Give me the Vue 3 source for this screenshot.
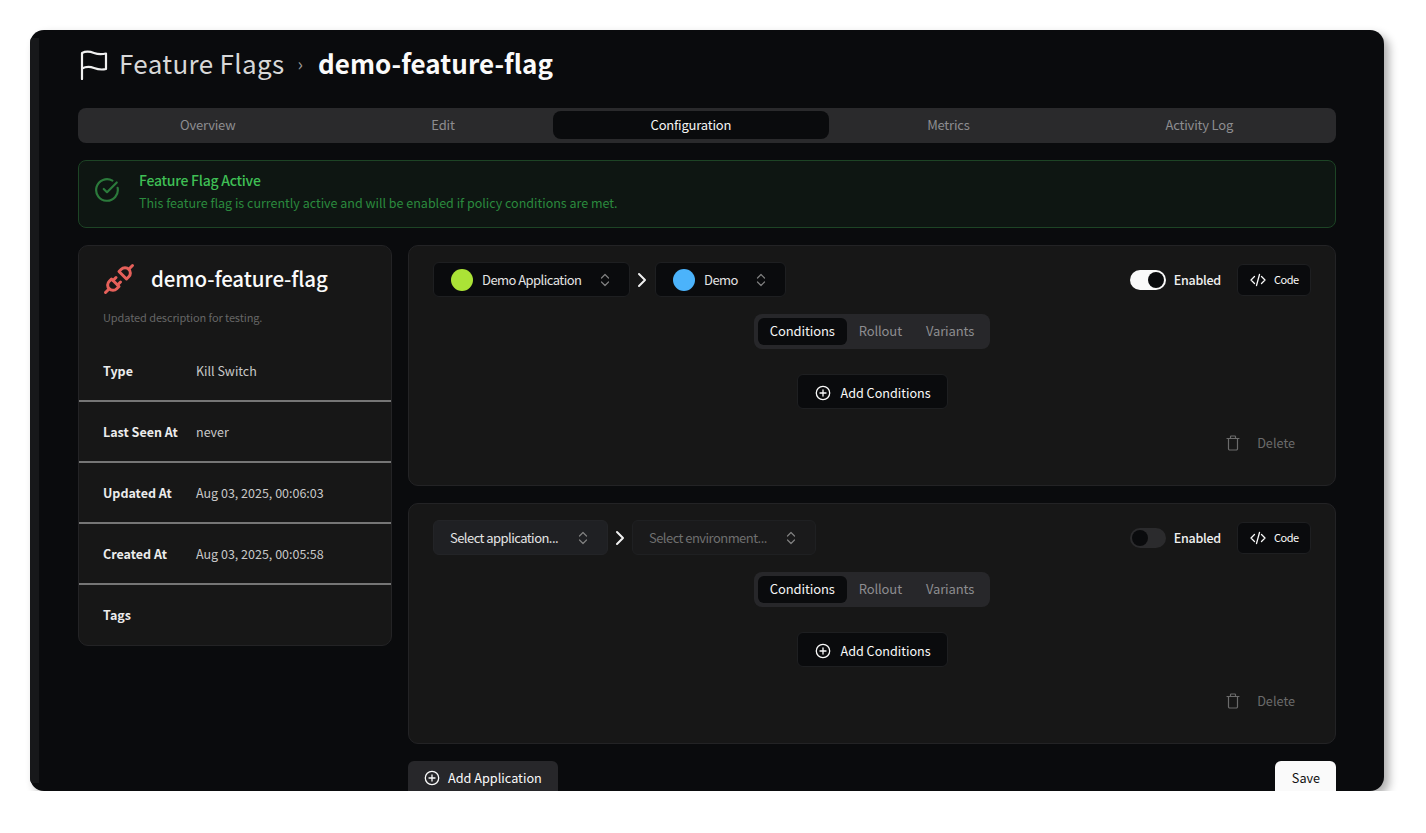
<script setup>
const tabs = ['Overview', 'Edit', 'Configuration', 'Metrics', 'Activity Log']
const details = [
  { label: 'Type', value: 'Kill Switch' },
  { label: 'Last Seen At', value: 'never' },
  { label: 'Updated At', value: 'Aug 03, 2025, 00:06:03' },
  { label: 'Created At', value: 'Aug 03, 2025, 00:05:58' },
  { label: 'Tags', value: '' },
]
const policies = [
  { id: 1, enabled: true, selected: true },
  { id: 2, enabled: false, selected: false },
]
const subTabs = ['Conditions', 'Rollout', 'Variants']
</script>

<template>
  <div class="window">
    <div class="rail"></div>
    <main class="main">
      <h1 class="crumbs">
        <svg class="crumbs__flag" viewBox="0 0 28 30" fill="none" stroke="currentColor" stroke-width="2.200" stroke-linecap="round" stroke-linejoin="round">
          <path d="M2 29V3c4-2 8-1.500 12 0s8 1.500 12 .5v15.500c-4 1-8 .5-12-1s-8-1.500-12 .5" />
        </svg>
        <span class="crumbs__root">Feature Flags</span>
        <span class="crumbs__sep">›</span>
        <span class="crumbs__name">demo-feature-flag</span>
      </h1>

      <nav class="tabs">
        <a v-for="tab in tabs" :key="tab" class="tabs__item" :class="{ 'tabs__item--active': tab === 'Configuration' }">{{ tab }}</a>
      </nav>

      <section class="alert">
        <svg class="alert__icon" viewBox="0 0 24 24" fill="none" stroke="currentColor" stroke-width="2" stroke-linecap="round" stroke-linejoin="round">
          <path d="M21.800 10A10 10 0 1 1 17 3.300" />
          <path d="M9 11l3 3L21 5" />
        </svg>
        <div class="alert__body">
          <div class="alert__title">Feature Flag Active</div>
          <div class="alert__text">This feature flag is currently active and will be enabled if policy conditions are met.</div>
        </div>
      </section>

      <div class="columns">
        <aside class="info">
          <div class="info__head">
            <svg class="info__plug" viewBox="0 0 24 24" fill="none" stroke="currentColor" stroke-width="2" stroke-linecap="round" stroke-linejoin="round">
              <path d="M7 12l5 5l-1.500 1.500a3.536 3.536 0 1 1-5-5l1.500-1.500z" />
              <path d="M17 12l-5-5l1.500-1.500a3.536 3.536 0 1 1 5 5l-1.500 1.500z" />
              <path d="M3 21l2.500-2.500" />
              <path d="M18.500 5.500L21 3" />
              <path d="M10 11l-2 2" />
              <path d="M13 14l-2 2" />
            </svg>
            <span class="info__title">demo-feature-flag</span>
          </div>
          <p class="info__desc">Updated description for testing.</p>
          <div class="info__rows">
            <div v-for="row in details" :key="row.label" class="info__row">
              <span class="info__label">{{ row.label }}</span>
              <span class="info__value">{{ row.value }}</span>
            </div>
          </div>
        </aside>

        <div class="policies">
          <section v-for="policy in policies" :key="policy.id" class="policy">
            <div class="policy__top">
              <div class="policy__selects">
                <template v-if="policy.selected">
                  <button class="select select--app">
                    <span class="dot dot--lime"></span>
                    <span>Demo Application</span>
                    <svg class="updown" viewBox="0 0 12 16" fill="none" stroke="currentColor" stroke-width="1.200" stroke-linecap="round" stroke-linejoin="round"><path d="M2.500 6L6 2.500 9.500 6M2.500 10L6 13.500 9.500 10" /></svg>
                  </button>
                  <svg class="next" viewBox="0 0 10 16" fill="none" stroke="currentColor" stroke-width="2" stroke-linecap="round" stroke-linejoin="round"><path d="M2 2l6 6-6 6" /></svg>
                  <button class="select select--env">
                    <span class="dot dot--blue"></span>
                    <span>Demo</span>
                    <svg class="updown" viewBox="0 0 12 16" fill="none" stroke="currentColor" stroke-width="1.200" stroke-linecap="round" stroke-linejoin="round"><path d="M2.500 6L6 2.500 9.500 6M2.500 10L6 13.500 9.500 10" /></svg>
                  </button>
                </template>
                <template v-else>
                  <button class="select select--pick">
                    <span>Select application...</span>
                    <svg class="updown" viewBox="0 0 12 16" fill="none" stroke="currentColor" stroke-width="1.200" stroke-linecap="round" stroke-linejoin="round"><path d="M2.500 6L6 2.500 9.500 6M2.500 10L6 13.500 9.500 10" /></svg>
                  </button>
                  <svg class="next" viewBox="0 0 10 16" fill="none" stroke="currentColor" stroke-width="2" stroke-linecap="round" stroke-linejoin="round"><path d="M2 2l6 6-6 6" /></svg>
                  <button class="select select--disabled">
                    <span>Select environment...</span>
                    <svg class="updown" viewBox="0 0 12 16" fill="none" stroke="currentColor" stroke-width="1.200" stroke-linecap="round" stroke-linejoin="round"><path d="M2.500 6L6 2.500 9.500 6M2.500 10L6 13.500 9.500 10" /></svg>
                  </button>
                </template>
              </div>
              <div class="policy__right">
                <span class="switch" :class="{ 'switch--on': policy.enabled }"><span class="switch__knob"></span></span>
                <span class="switch-label">Enabled</span>
                <button class="code">
                  <svg viewBox="0 0 16 16" fill="none" stroke="currentColor" stroke-width="1.300" stroke-linecap="round" stroke-linejoin="round"><path d="M4.500 4.500L1 8l3.500 3.500M11.500 4.500L15 8l-3.500 3.500M9.500 2.500l-3 11" /></svg>
                  <span class="code__label">Code</span>
                </button>
              </div>
            </div>

            <div class="subtabs">
              <a v-for="sub in subTabs" :key="sub" class="subtabs__item" :class="{ 'subtabs__item--active': sub === 'Conditions' }">{{ sub }}</a>
            </div>

            <button class="add-cond">
              <svg class="plus" viewBox="0 0 16 16" fill="none" stroke="currentColor" stroke-width="1.300" stroke-linecap="round"><circle cx="8" cy="8" r="6.700" /><path d="M8 5v6M5 8h6" /></svg>
              <span>Add Conditions</span>
            </button>

            <div class="policy__foot">
              <svg class="trash" viewBox="0 0 14 16" fill="none" stroke="currentColor" stroke-width="1.200" stroke-linecap="round" stroke-linejoin="round"><path d="M1 3.500h12M2.500 3.500v10.300a1.200 1.200 0 0 0 1.200 1.200h6.600a1.200 1.200 0 0 0 1.200-1.200V3.500M4.500 3.500V1.800A.8.8 0 0 1 5.300 1h3.400a.8.8 0 0 1 .8.800v1.700" /></svg>
              <span>Delete</span>
            </div>
          </section>

          <div class="actions">
            <button class="add-app">
              <svg class="plus" viewBox="0 0 16 16" fill="none" stroke="currentColor" stroke-width="1.300" stroke-linecap="round"><circle cx="8" cy="8" r="6.700" /><path d="M8 5v6M5 8h6" /></svg>
              <span>Add Application</span>
            </button>
            <button class="save">Save</button>
          </div>
        </div>
      </div>
    </main>
  </div>
</template>

<style>
html,
body {
  margin: 0;
  background: #fff;
}
</style>

<style scoped>
.window {
  box-sizing: border-box;
  position: relative;
  display: flex;
  width: 1354px;
  height: 761px;
  margin: 30px 0 0 30px;
  overflow: hidden;
  border-radius: 14px;
  background: #0a0b0d;
  box-shadow: 5px 5px 10px rgba(0, 0, 0, 0.32);
  font-family: "Noto Sans CJK SC", "Noto Sans", sans-serif;
  color: #fafafa;
  white-space: nowrap;
}

.rail {
  flex: none;
  width: 9px;
  margin: 8px 0;
  background: #17181a;
}

.main {
  flex: none;
  width: 1258px;
  margin-left: 39px;
}

button {
  font-family: inherit;
  color: inherit;
  cursor: pointer;
}

.crumbs {
  display: flex;
  align-items: center;
  height: 66px;
  margin: 0 0 12px;
  font-size: 26px;
  line-height: 1;
  font-weight: 400;
}

.crumbs__flag {
  flex: none;
  width: 28px;
  height: 30px;
  margin: 4px 0 0 2px;
  color: #f0f0f0;
}

.crumbs__root {
  margin-left: 11px;
  letter-spacing: 0.35px;
  color: #d8d8d8;
}

.crumbs__sep {
  margin: 0 15px 0 13px;
  font-size: 18px;
  color: #9a9a9a;
}

.crumbs__name {
  font-weight: 700;
  letter-spacing: 0.05px;
  color: #fafafa;
}

.tabs {
  box-sizing: border-box;
  display: flex;
  height: 35px;
  padding: 3px 5px 4px 4px;
  border-radius: 8px;
  background: #2a2a2c;
}

.tabs__item {
  flex: 1 1 auto;
  display: flex;
  align-items: center;
  justify-content: center;
  padding-bottom: 2px;
  border-radius: 8px;
  font-size: 13px;
  letter-spacing: -0.2px;
  color: #8d8d90;
}

.tabs__item--active {
  background: #0a0b0d;
  color: #f4f4f4;
}

.alert {
  box-sizing: border-box;
  display: flex;
  height: 68px;
  margin-top: 17px;
  padding: 9px 15px;
  border: 1px solid #1d4425;
  border-radius: 8px;
  background: #0e1612;
}

.alert__icon {
  flex: none;
  width: 26px;
  height: 26px;
  margin-top: 7px;
  color: #2b7a3b;
}

.alert__body {
  margin-left: 19px;
}

.alert__title {
  font-size: 14px;
  line-height: 20px;
  font-weight: 500;
  letter-spacing: -0.25px;
  color: #3fbf55;
}

.alert__text {
  margin-top: 3px;
  font-size: 12.500px;
  line-height: 20px;
  color: #2b8a3e;
}

.columns {
  display: flex;
  gap: 16px;
  margin-top: 17px;
}

.info {
  box-sizing: border-box;
  flex: none;
  width: 314px;
  height: 401px;
  border: 1px solid #232325;
  border-radius: 10px;
  background: #171717;
}

.info__head {
  display: flex;
  align-items: center;
  gap: 14px;
  padding: 15px 0 0 22px;
}

.info__plug {
  flex: none;
  width: 36px;
  height: 36px;
  color: #e5605a;
}

.info__title {
  padding-bottom: 3px;
  font-size: 20.500px;
  line-height: 32px;
  font-weight: 500;
  letter-spacing: -0.1px;
}

.info__desc {
  margin: 11px 0 0 24px;
  font-size: 11px;
  line-height: 18px;
  letter-spacing: -0.1px;
  color: #666;
}

.info__rows {
  margin-top: 15px;
}

.info__row {
  box-sizing: border-box;
  display: flex;
  align-items: center;
  height: 61px;
  padding: 0 0 1px 24px;
  border-bottom: 2px solid #767676;
  font-size: 12.500px;
}

.info__row:last-child {
  padding-bottom: 3px;
  border-bottom: 0;
}

.info__label {
  flex: none;
  width: 93px;
  font-weight: 700;
  color: #ececec;
}

.info__value {
  color: #c8c8c8;
}

.policies {
  flex: 1;
  display: flex;
  flex-direction: column;
  gap: 17px;
}

.policy {
  box-sizing: border-box;
  display: flex;
  flex-direction: column;
  align-items: center;
  height: 241px;
  padding: 16px 24px 0;
  border: 1px solid #232325;
  border-radius: 10px;
  background: #171717;
}

.policy__top {
  align-self: stretch;
  display: flex;
  align-items: center;
  justify-content: space-between;
  height: 35px;
}

.policy__selects {
  display: flex;
  align-items: center;
}

.select {
  box-sizing: border-box;
  display: flex;
  align-items: center;
  height: 35px;
  border: 1px solid #1e1f21;
  border-radius: 6px;
  background: #0a0b0d;
  font-size: 13px;
  letter-spacing: -0.55px;
  color: #e4e4e4;
}

.select--app {
  width: 197px;
  padding: 0 18px 0 17px;
}

.select--app + .next {
  margin-right: 8px;
}

.select--env {
  width: 131px;
  padding: 0 18px 0 17px;
}

.select--pick {
  width: 175px;
  padding: 0 18px 0 16px;
  border-color: #232427;
  background: #1f2023;
}

.select--disabled {
  width: 184px;
  padding: 0 18px 0 16px;
  border-color: #1f2022;
  background: #1a1a1b;
  color: #6f6f6f;
}

.dot {
  flex: none;
  width: 22px;
  height: 22px;
  margin-right: 9px;
  border-radius: 50%;
}

.dot--lime {
  background: #abe336;
}

.dot--blue {
  background: #4bb3fb;
}

.updown {
  flex: none;
  width: 12px;
  height: 16px;
  margin-left: auto;
  color: #808080;
}

.next {
  flex: none;
  width: 10px;
  height: 16px;
  margin: 0 7px;
  color: #f0f0f0;
}

.policy__right {
  display: flex;
  align-items: center;
}

.switch {
  box-sizing: border-box;
  display: flex;
  align-items: center;
  width: 36px;
  height: 20px;
  padding: 2px;
  border-radius: 10px;
  background: #2b2b2d;
}

.switch--on {
  justify-content: flex-end;
  background: #fafafa;
}

.switch__knob {
  width: 16px;
  height: 16px;
  border-radius: 50%;
  background: #0a0b0d;
}

.switch-label {
  margin: 0 16px 0 8px;
  font-size: 12.500px;
  font-weight: 500;
  letter-spacing: -0.25px;
  color: #f0f0f0;
}

.code {
  box-sizing: border-box;
  display: flex;
  align-items: center;
  gap: 8px;
  width: 74px;
  height: 32px;
  padding: 0 12px;
  border: 1px solid #1e1f21;
  border-radius: 6px;
  background: #0a0b0d;
  font-size: 11px;
  letter-spacing: -0.5px;
}

.code svg {
  flex: none;
  width: 16px;
  height: 16px;
}

.code__label {
  padding-bottom: 2px;
}

.subtabs {
  box-sizing: border-box;
  display: flex;
  height: 35px;
  margin-top: 17px;
  padding: 4px;
  border-radius: 8px;
  background: #27272a;
}

.subtabs__item {
  display: flex;
  align-items: center;
  padding: 0 12px 2px;
  border-radius: 6px;
  font-size: 13px;
  letter-spacing: -0.12px;
  color: #8d8d90;
}

.subtabs__item--active {
  background: #0a0b0d;
  color: #f4f4f4;
}

.add-cond {
  box-sizing: border-box;
  display: flex;
  align-items: center;
  gap: 10px;
  width: 151px;
  height: 35px;
  margin-top: 25px;
  padding: 2px 0 0 17px;
  border: 1px solid #1e1f21;
  border-radius: 6px;
  background: #0a0b0d;
  font-size: 12.600px;
}

.plus {
  flex: none;
  width: 16px;
  height: 16px;
}

.policy__foot {
  align-self: flex-end;
  display: flex;
  align-items: center;
  gap: 17px;
  margin: 24px 16px 0 0;
  font-size: 12.700px;
  color: #6b6b6b;
}

.trash {
  width: 14px;
  height: 16px;
}

.actions {
  display: flex;
  justify-content: space-between;
}

.add-app {
  box-sizing: border-box;
  display: flex;
  align-items: center;
  gap: 8px;
  width: 150px;
  height: 35px;
  padding: 0 16px 2px;
  border: 0;
  border-radius: 6px;
  background: #27272a;
  font-size: 12.700px;
}

.save {
  box-sizing: border-box;
  width: 61px;
  height: 35px;
  padding: 0 0 2px 1px;
  border: 0;
  border-radius: 6px;
  background: #fafafa;
  font-size: 12.700px;
  color: #111;
}
</style>
